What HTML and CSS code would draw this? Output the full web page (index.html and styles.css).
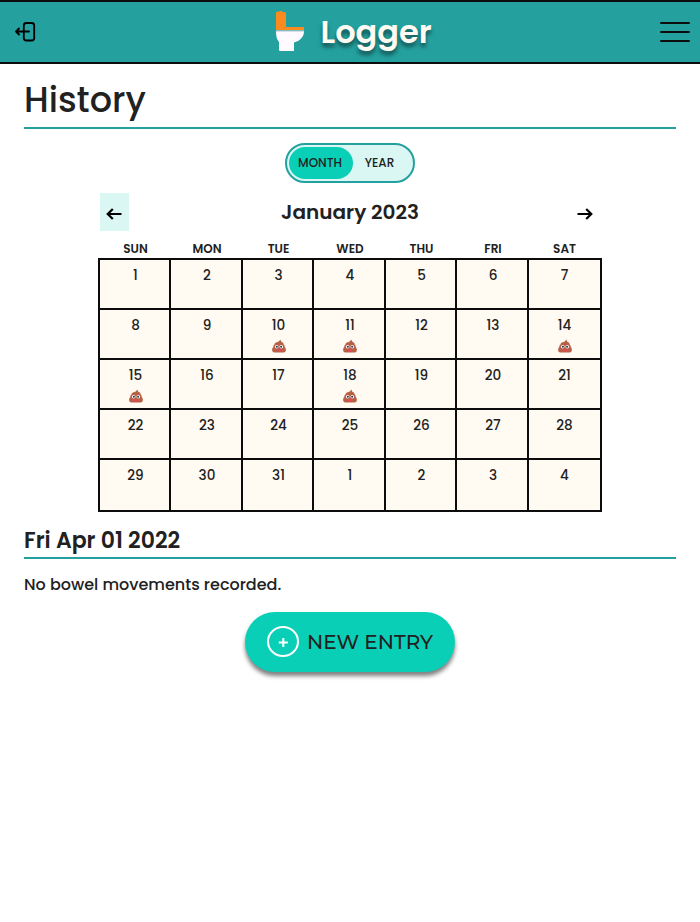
FILE: index.html
```html
<!DOCTYPE html>
<html lang="en">
<head>
<meta charset="utf-8">
<title>Logger</title>
<link rel="stylesheet" href="styles.css">
</head>
<body>
<svg class="defs" aria-hidden="true">
  <symbol id="poop" viewBox="0 0 14 14">
    <path fill="#b86046" d="M8 .4C8.600 1.300 9.400 1.800 9.400 2.900c1.700.3 2.400 1.300 2.200 2.500 1 .5 1.300 1.400 1 2.600 2 1.300 1.700 5.500-1 5.500H2.400C-.3 13.500-.6 9.300 1.400 8 1.100 6.800 1.600 5.900 2.600 5.500 2.500 4.200 3.400 3.500 4.800 3.200 6.200 2.900 8 1.900 8 .4z"/>
    <circle cx="4.700" cy="7.700" r="1.800" fill="#fff"/><circle cx="9.300" cy="7.700" r="1.800" fill="#fff"/>
    <circle cx="4.900" cy="7.700" r="1" fill="#26364d"/><circle cx="9.100" cy="7.700" r="1" fill="#26364d"/>
    <path fill="#ef3f5c" d="M4.800 10.500h4.400c0 2.500-4.400 2.500-4.400 0z"/>
  </symbol>
</svg>
<header class="topbar">
  <svg class="exit" viewBox="0 0 22 22" fill="none" stroke="#000" stroke-width="1.800" stroke-linecap="round" stroke-linejoin="round">
    <path d="M15 10.500H2M5 7.500l-3 3 3 3"/><rect x="9.800" y="2" width="10.400" height="17.500" rx="2.500"/>
  </svg>
  <div class="brand">
    <svg class="toilet" viewBox="0 0 30 42">
      <path fill="#fb8b1e" d="M2 2.500 4 1.500h1.500L6.500 1h1l1 1h2q1.500 0 1.500 1.500V17H30v3H2z"/>
      <path fill="#d9dde5" d="M2 20.500h28v1.500H2z"/>
      <path fill="#fffaff" d="M2 22h28c-.3 5-4 9-10 10.500V41H6q-1 0-1-1v-8q-3-3.500-3-10z"/>
    </svg>
    <span class="name">Logger</span>
  </div>
  <div class="menu"><i></i><i></i><i></i></div>
</header>
<main>
  <h1><span>History</span></h1>
  <div class="toggle"><span class="on">MONTH</span><span class="off">YEAR</span></div>
  <section class="calendar">
    <div class="monthbar">
      <button class="prev" aria-label="Previous"><svg viewBox="0 0 16 14" class="arrow"><path d="M15.500 7H2M6.800 2 1.700 7l5.100 5"/></svg></button>
      <h2>January 2023</h2>
      <button class="next" aria-label="Next"><svg viewBox="0 0 16 14" class="arrow"><path d="M.5 7H14M9.200 2l5.100 5-5.100 5"/></svg></button>
    </div>
    <div class="week"><b>SUN</b><b>MON</b><b>TUE</b><b>WED</b><b>THU</b><b>FRI</b><b>SAT</b></div>
    <div class="days">
      <div>1</div><div>2</div><div>3</div><div>4</div><div>5</div><div>6</div><div>7</div>
      <div>8</div><div>9</div><div>10<svg><use href="#poop"/></svg></div><div>11<svg><use href="#poop"/></svg></div><div>12</div><div>13</div><div>14<svg><use href="#poop"/></svg></div>
      <div>15<svg><use href="#poop"/></svg></div><div>16</div><div>17</div><div>18<svg><use href="#poop"/></svg></div><div>19</div><div>20</div><div>21</div>
      <div>22</div><div>23</div><div>24</div><div>25</div><div>26</div><div>27</div><div>28</div>
      <div>29</div><div>30</div><div>31</div><div>1</div><div>2</div><div>3</div><div>4</div>
    </div>
  </section>
  <h3><span>Fri Apr 01 2022</span></h3>
  <p>No bowel movements recorded.</p>
  <button class="entry">
    <svg viewBox="0 0 32 32" fill="none" stroke="#fff" stroke-width="2"><ellipse cx="16" cy="15.500" rx="15" ry="14.500"/><path d="M16.300 12v9M11.800 16.500h9"/></svg>
    <span>NEW ENTRY</span>
  </button>
</main>
</body>
</html>
```
FILE: styles.css
```css
* { box-sizing: border-box; }
body { margin: 0; min-height: 100vh; background: #fff; color: #212121; font-family: Poppins, Inter, "Liberation Sans", sans-serif; }
.defs { display: none; }
button { border: 0; padding: 0; background: none; color: inherit; font: inherit; }
svg { display: block; }

.topbar { height: 64px; border-top: 2px solid #0c0c0c; border-bottom: 2px solid #0c0c0c; background: #24a19f; display: flex; justify-content: space-between; padding: 0 10px 0 14px; }
.exit { width: 22px; height: 22px; margin-top: 19px; }
.brand { display: flex; margin-left: 11px; width: 160px; }
.toilet { flex: none; width: 30px; height: 42px; margin-top: 8px; }
.name { margin-left: 17px; font-size: 32px; line-height: 59px; font-weight: 600; color: #fffaf2; text-shadow: 0 4px 4px rgba(0, 0, 0, .5); white-space: nowrap; }
.menu { width: 30px; padding-top: 20px; display: flex; flex-direction: column; gap: 7px; }
.menu i { height: 2px; background: #0c0c0c; border-radius: 1px; }

main { padding: 0 24px; display: flex; flex-direction: column; align-items: center; }
h1 { align-self: stretch; margin: 0; height: 65px; border-bottom: 2px solid #24a19f; font-size: 35px; line-height: 72px; font-weight: 500; }
.toggle { margin-top: 14px; width: 130px; height: 40px; border: 2px solid #24a19f; border-radius: 20px; background: #daf7f3; padding: 2px; display: flex; font-size: 12px; line-height: 32px; font-weight: 500; text-align: center; }
.on { width: 64px; padding-right: 2px; border-radius: 16px; background: #0acfb7; }
.off { width: 53px; }
.calendar { width: 504px; margin-top: 10px; }
.monthbar { height: 38px; padding: 0 2px; display: flex; justify-content: space-between; }
.prev, .next { width: 29px; height: 38px; display: flex; align-items: center; justify-content: center; padding-top: 4px; }
.prev { background: #daf7f3; padding-right: 1px; }
.arrow { width: 16px; height: 14px; fill: none; stroke: #000; stroke-width: 2.200; }
h2 { margin: 0; font-size: 20px; line-height: 38px; font-weight: 600; }
.week, .days { display: grid; grid-template-columns: 71px 72px 71px 72px 71px 72px 73px; }
.week { height: 27px; padding: 0 1px; text-align: center; font-size: 12px; line-height: 36px; }
.week b { font-weight: 600; padding-left: 2px; }
.days { border: 1px solid #0c0c0c; grid-template-rows: repeat(4, 50px) 52px; }
.days div { border: 1px solid #0c0c0c; background: #fffaf2; text-align: center; font-size: 13.600px; line-height: 32px; font-weight: 500; padding-left: 2px; }
.days div:nth-child(7n), .week b:nth-child(7n) { padding-left: 0; }
.days svg { width: 14px; height: 14px; margin: -3px auto 0; }
h3 { align-self: stretch; margin: 0; height: 47px; border-bottom: 2px solid #24a19f; font-size: 22px; line-height: 57px; font-weight: 600; }
p { align-self: stretch; margin: 14px 0 0; font-size: 16px; line-height: 24px; font-weight: 500; }
.entry { margin-top: 15px; width: 210px; height: 60px; border-radius: 30px; background: #0acfb7; box-shadow: 0 4px 4px rgba(0, 0, 0, .5); display: flex; align-items: center; padding-left: 22px; font-family: Montserrat, Inter, sans-serif; font-size: 20px; font-weight: 500; white-space: nowrap; }
.entry svg { width: 32px; height: 32px; margin-right: 8px; }
```
